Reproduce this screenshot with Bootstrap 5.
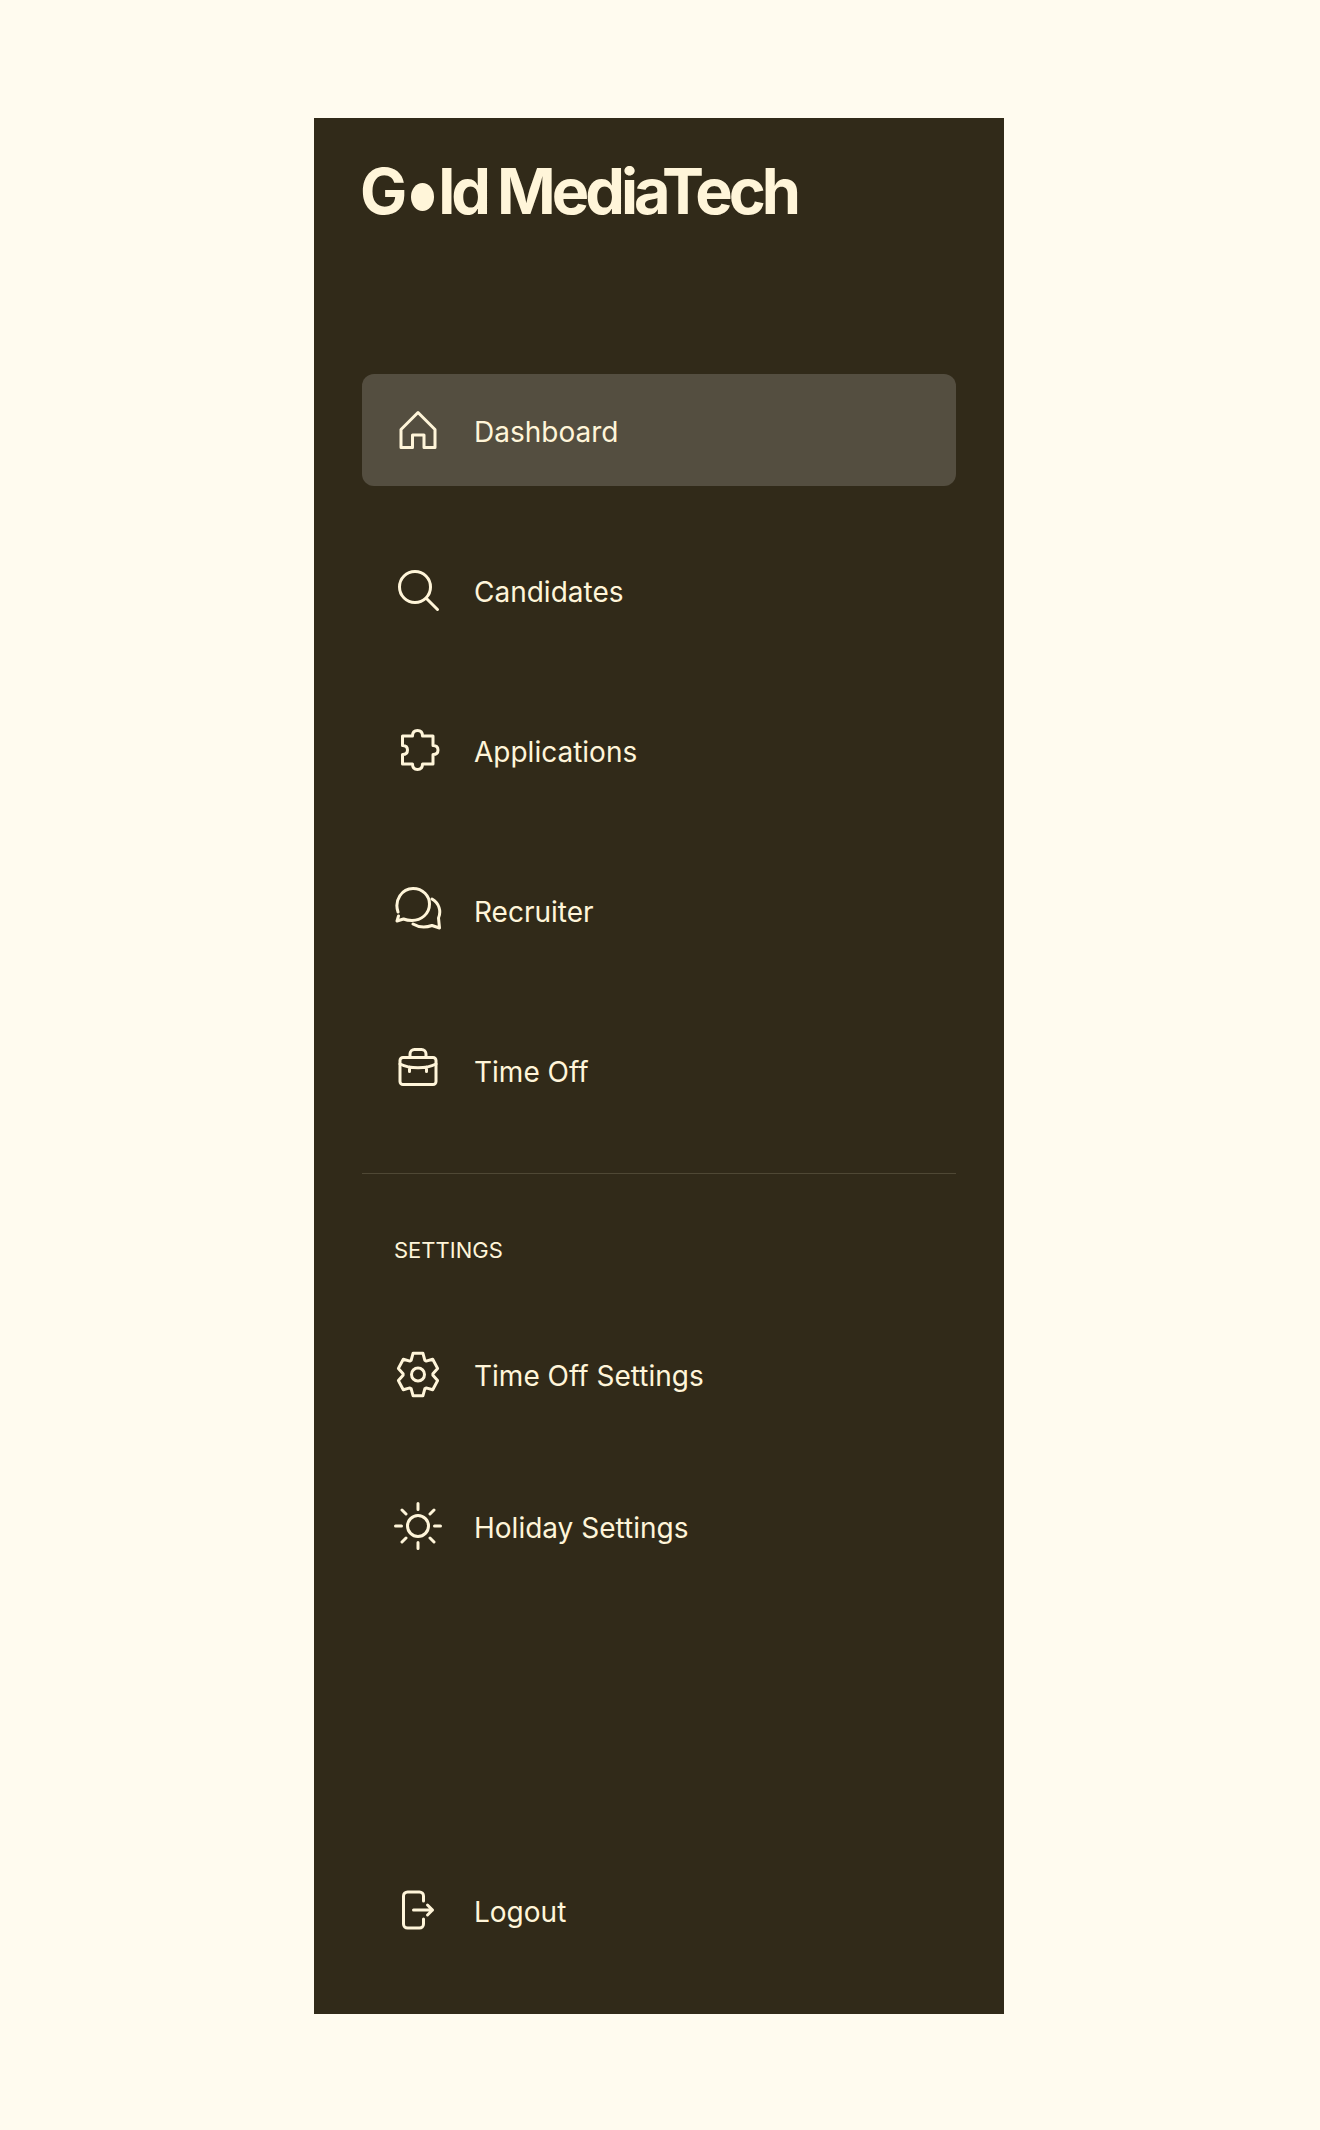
<!DOCTYPE html>
<html lang="en">
<head>
    <meta charset="UTF-8">
    <meta name="viewport" content="width=device-width, initial-scale=1.0">
    <title>Gold MediaTech</title>
    <link href="https://cdn.jsdelivr.net/npm/bootstrap@5.3.0/dist/css/bootstrap.min.css" rel="stylesheet">
    <style>
        body {
            background: #fffbef;
            font-family: "Inter", "Liberation Sans", sans-serif;
            color: #fff5d9;
        }
        .side-panel {
            width: 690px;
            height: 1896px;
            margin: 118px 0 0 314px;
            padding: 31px 48px 48px;
            background: #312a19;
        }
        .logo-text {
            font-size: 63px;
            line-height: 84px;
            font-weight: 700;
            letter-spacing: -4px;
            word-spacing: -1px;
            margin: 0 0 141px -2px;
            white-space: nowrap;
        }
        .logo-dot {
            display: inline-block;
            width: 23px;
            height: 28px;
            margin: 0 4px 0 8px;
            border-radius: 50%;
            background: #fff5d9;
            color: #fff5d9;
            font-size: 16px;
            line-height: 28px;
            letter-spacing: 0;
            text-align: center;
            overflow: hidden;
            vertical-align: 3px;
        }
        .side-link {
            height: 112px;
            padding: 0 32px;
            gap: 32px;
            border-radius: 12px;
            color: #fff5d9;
            font-size: 28px;
            text-decoration: none;
        }
        .side-link:hover { color: #fff5d9; }
        .side-link.is-active { background: #544e40; }
        .side-link span { margin-top: 4px; }
        .side-link svg {
            width: 48px;
            height: 48px;
            flex-shrink: 0;
            fill: none;
            stroke: #fff5d9;
            stroke-width: 3;
            stroke-linecap: round;
            stroke-linejoin: round;
        }
        .main-links { gap: 48px; }
        .side-rule {
            margin: 47px 0 0;
            border-top: 1px solid #fff5d9;
            opacity: .15;
        }
        .settings-label {
            font-size: 22px;
            line-height: 32px;
            padding: 0 32px;
            margin: 60px 0 52px;
        }
        .settings-links { gap: 40px; }
    </style>
</head>
<body>
    <aside class="side-panel d-flex flex-column">
        <div class="logo-text">G<span class="logo-dot">o</span>ld MediaTech</div>

        <nav class="main-links d-flex flex-column">
            <a href="#" class="side-link is-active d-flex align-items-center">
                <svg viewBox="0 0 48 48"><path d="M7 41.500V23.500L24 6.500 41 23.500V41.500H30V29H18.500V41.500Z"/></svg>
                <span>Dashboard</span>
            </a>
            <a href="#" class="side-link d-flex align-items-center">
                <svg viewBox="0 0 48 48"><circle cx="21" cy="21" r="15.500"/><path d="M32.500 32.500 43.500 43.500"/></svg>
                <span>Candidates</span>
            </a>
            <a href="#" class="side-link d-flex align-items-center">
                <svg viewBox="0 0 48 48"><path d="M8.500 10H18.500C18.500 6 20.500 4.500 23.500 4.500 26.500 4.500 28.500 6 28.500 10H39V19.500C42.500 19.500 44 21.500 44 24 44 26.500 42.500 28.500 39 28.500V38H28.500C28.500 41.500 26.500 43.500 23.500 43.500 20.500 43.500 18.500 41.500 18.500 38H8.500V28.500C12 28.500 13.500 26.500 13.500 24 13.500 21.500 12 19.500 8.500 19.500Z"/></svg>
                <span>Applications</span>
            </a>
            <a href="#" class="side-link d-flex align-items-center">
                <svg viewBox="0 0 48 48"><path d="M4 26C0 14 8 2.500 19 2.500 29 2.500 35.500 10 35.500 18 35.500 28 27 34.500 18 34.500 15 34.500 12 34 9.500 33L3 35 4.500 30"/><path d="M38 13C45 17 47.500 25 44.500 32L45.500 42 38 39.500C31 42 24 41 19 38"/></svg>
                <span>Recruiter</span>
            </a>
            <a href="#" class="side-link d-flex align-items-center">
                <svg viewBox="0 0 48 48"><rect x="6" y="11.500" width="36" height="27" rx="3"/><path d="M6 18C16 23 32 23 42 18M15.500 21V25.500M32.500 21V25.500M16 11.500V8A4.500 4.500 0 0 1 20.500 3.500H27.500A4.500 4.500 0 0 1 32 8V11.500"/></svg>
                <span>Time Off</span>
            </a>
        </nav>

        <hr class="side-rule">
        <div class="settings-label">SETTINGS</div>

        <nav class="settings-links d-flex flex-column">
            <a href="#" class="side-link d-flex align-items-center">
                <svg viewBox="0 0 48 48"><circle cx="24" cy="24.500" r="6.500"/><path d="M17.200 10.200 19.100 3.200H28.900L30.800 10.200 32.100 11.100 38.700 9.200 43.600 18.400 38.900 23.700V25.300L43.600 30.600 38.700 39.800 32.100 37.900 30.800 38.800 28.900 45.800H19.100L17.200 38.800 15.900 37.900 9.300 39.800 4.400 30.600 9.100 25.300V23.700L4.400 18.400 9.300 9.200 15.900 11.100Z"/></svg>
                <span>Time Off Settings</span>
            </a>
            <a href="#" class="side-link d-flex align-items-center">
                <svg viewBox="0 0 48 48"><circle cx="24" cy="24" r="10.500"/><path d="M24 1.500V7.500M24 40.500V46.500M1.500 24H7.500M40.500 24H46.500M8 8 12 12M36 36 40 40M8 40 12 36M36 12 40 8"/></svg>
                <span>Holiday Settings</span>
            </a>
        </nav>

        <a href="#" class="side-link d-flex align-items-center mt-auto">
            <svg viewBox="0 0 48 48"><path d="M29.500 15V10A4 4 0 0 0 25.500 6H13.500A4 4 0 0 0 9.500 10V38A4 4 0 0 0 13.500 42H25.500A4 4 0 0 0 29.500 38V33"/><path d="M19.500 24H38.500M33.500 19 38.500 24 33.500 29"/></svg>
            <span>Logout</span>
        </a>
    </aside>

    <script src="https://cdn.jsdelivr.net/npm/bootstrap@5.3.0/dist/js/bootstrap.bundle.min.js"></script>
</body>
</html>
